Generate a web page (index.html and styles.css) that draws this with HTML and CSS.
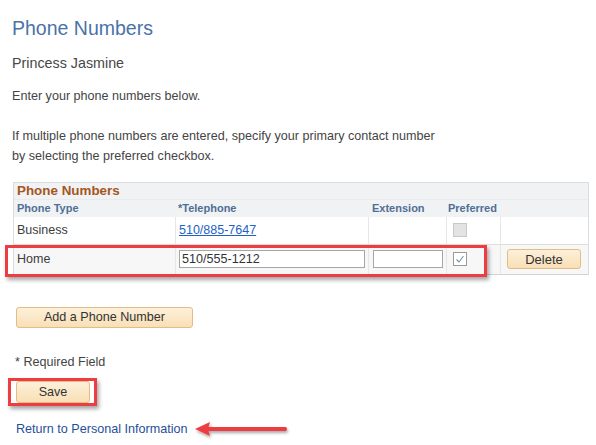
FILE: index.html
```html
<!DOCTYPE html>
<html>
<head>
<meta charset="utf-8">
<link rel="stylesheet" href="styles.css">
</head>
<body>
<div class="page">
  <h1 class="title">Phone Numbers</h1>
  <div class="name">Princess Jasmine</div>
  <p class="intro">Enter your phone numbers below.</p>
  <p class="intro gap">If multiple phone numbers are entered, specify your primary contact number<br>by selecting the preferred checkbox.</p>

  <div class="grid-wrap">
    <div class="grid">
      <div class="row caption"><div class="cell">Phone Numbers</div></div>
      <div class="row head">
        <div class="cell">Phone Type</div>
        <div class="cell">*Telephone</div>
        <div class="cell">Extension</div>
        <div class="cell">Preferred</div>
        <div class="cell"></div>
      </div>
      <div class="row body business">
        <div class="cell">Business</div>
        <div class="cell div"><a href="#" class="phone-link">510/885-7647</a></div>
        <div class="cell div"></div>
        <div class="cell div cb-cell"><span class="cb disabled"></span></div>
        <div class="cell div"></div>
      </div>
      <div class="row body home">
        <div class="cell">Home</div>
        <div class="cell div"><span class="field tel">510/555-1212</span></div>
        <div class="cell div"><span class="field ext"></span></div>
        <div class="cell div cb-cell"><span class="cb checked"><svg width="12" height="12" viewBox="0 0 12 12"><path d="M2.5 6.5 L5 9 L9.5 3" fill="none" stroke="#7d8ea8" stroke-width="1.1"/></svg></span></div>
        <div class="cell div"><button class="btn delete">Delete</button></div>
      </div>
    </div>
    <div class="mark row-mark"></div>
  </div>

  <div class="actions">
    <button class="btn add">Add a Phone Number</button>
    <div class="required">* Required Field</div>
    <div class="save-mark"><button class="btn save">Save</button></div>
    <div class="return">
      <a href="#" class="return-link">Return to Personal Information</a>
      <svg class="arrow" width="100" height="20" viewBox="0 0 100 20">
        <defs>
          <filter id="sh" x="-10%" y="-40%" width="130%" height="200%">
            <feDropShadow dx="1" dy="2" stdDeviation="1.5" flood-color="#000" flood-opacity="0.35"/>
          </filter>
        </defs>
        <g filter="url(#sh)">
          <path d="M1 9 L16 2 L14 9 L16 16 Z" fill="#ee3d42"/>
          <path d="M14 7 L92 7 Q94 9 92 11 L14 11 Z" fill="#ee3d42"/>
        </g>
      </svg>
    </div>
  </div>
</div>
</body>
</html>
```
FILE: styles.css
```css
* { box-sizing: border-box; }
html, body { margin: 0; padding: 0; background: #fff; }
body {
  font-family: "Liberation Sans", Arial, sans-serif;
  color: #444;
  width: 596px;
  height: 445px;
  overflow: hidden;
}
.page { padding: 16px 0 0 12px; }
.title {
  margin: 0;
  font-size: 19.5px;
  line-height: 24px;
  font-weight: normal;
  color: #4a72a8;
}
.name {
  margin-top: 13px;
  font-size: 14.3px;
  line-height: 20px;
  color: #474747;
}
.intro {
  margin: 12.6px 0 0 0;
  font-size: 12.6px;
  line-height: 20px;
  color: #444;
}
.intro.gap { margin-top: 20px; }

.grid-wrap {
  position: relative;
  margin: 16px 0 0 1px;
  width: 576px;
}
.grid {
  border: 1px solid #d9dde2;
  border-bottom-color: #d0d4d9;
}
.row {
  display: grid;
  grid-template-columns: 161px 193px 78px 54px 86px;
  align-items: center;
}
.cell {
  padding-left: 3px;
  height: 100%;
  display: flex;
  align-items: center;
  white-space: nowrap;
}
.caption {
  grid-template-columns: 1fr;
  height: 17px;
  background: #f0f2f4;
  border-bottom: 1px solid #e8eaed;
}
.caption .cell {
  font-size: 13.4px;
  font-weight: bold;
  color: #a5561c;
}
.head {
  height: 17px;
  background: #f0f2f4;
}
.head .cell {
  font-size: 11px;
  font-weight: bold;
  color: #4f6f97;
}
.head .cell:nth-child(3) { padding-left: 4px; }
.head .cell:nth-child(4) { padding-left: 2px; }
.body .cell {
  font-size: 12.5px;
  color: #3c3c3c;
}
.body .div { border-left: 1px solid #e6e6e6; }
.business { height: 28px; background: #fff; border-bottom: 1px solid #dedede; }
.home { height: 29px; background: #f7f7f7; }
.phone-link {
  color: #1f62c6;
  text-decoration: underline;
}
.field {
  display: block;
  height: 18px;
  border: 1px solid #a6a6a6;
  background: #fff;
  font-size: 12.6px;
  line-height: 16px;
  padding-left: 2px;
  color: #333;
}
.field.tel { width: 186px; }
.field.ext { width: 70px; margin-left: 1px; }
.cb-cell { padding-left: 6px; }
.cb {
  display: block;
  width: 14px;
  height: 14px;
  border: 1px solid #a8a8a8;
  background: #fff;
}
.cb.disabled { background: #e3e3e3; border-color: #c9c9c9; }
.cb.checked { border-color: #9a9a9a; }
.cb svg { display: block; margin: 0; }

.btn {
  font-family: "Liberation Sans", Arial, sans-serif;
  font-size: 12.6px;
  color: #333;
  background: linear-gradient(#fdf0d9, #f9dfb6);
  border: 1px solid #e2bd86;
  border-radius: 3px;
  padding: 0;
  display: block;
}
.btn.delete {
  width: 74px;
  height: 20px;
  margin-left: 3px;
  font-size: 13px;
}

.mark {
  position: absolute;
  border: 3px solid #ee3d42;
  box-shadow: 2px 3px 4px rgba(0, 0, 0, 0.35);
}
.row-mark {
  left: -8px;
  top: 63px;
  width: 482px;
  height: 32px;
}

.actions { padding-top: 32px; }
.btn.add {
  margin-left: 4px;
  width: 177px;
  height: 21px;
}
.required {
  margin: 24.6px 0 0 3px;
  font-size: 12.6px;
  line-height: 20px;
  color: #444;
}
.save-mark {
  display: inline-block;
  margin: 5.4px 0 0 -4px;
  padding: 0 4px 0 5px;
  border: 3px solid #ee3d42;
  box-shadow: 2px 3px 4px rgba(0, 0, 0, 0.35);
}
.btn.save {
  width: 74px;
  height: 22px;
}
.return {
  margin: 13px 0 0 4px;
  display: flex;
  align-items: center;
  height: 20px;
}
.return-link {
  font-size: 12.6px;
  line-height: 20px;
  color: #1f4f9a;
  text-decoration: none;
}
.arrow { display: block; margin-left: 6px; margin-top: 2px; }
```
